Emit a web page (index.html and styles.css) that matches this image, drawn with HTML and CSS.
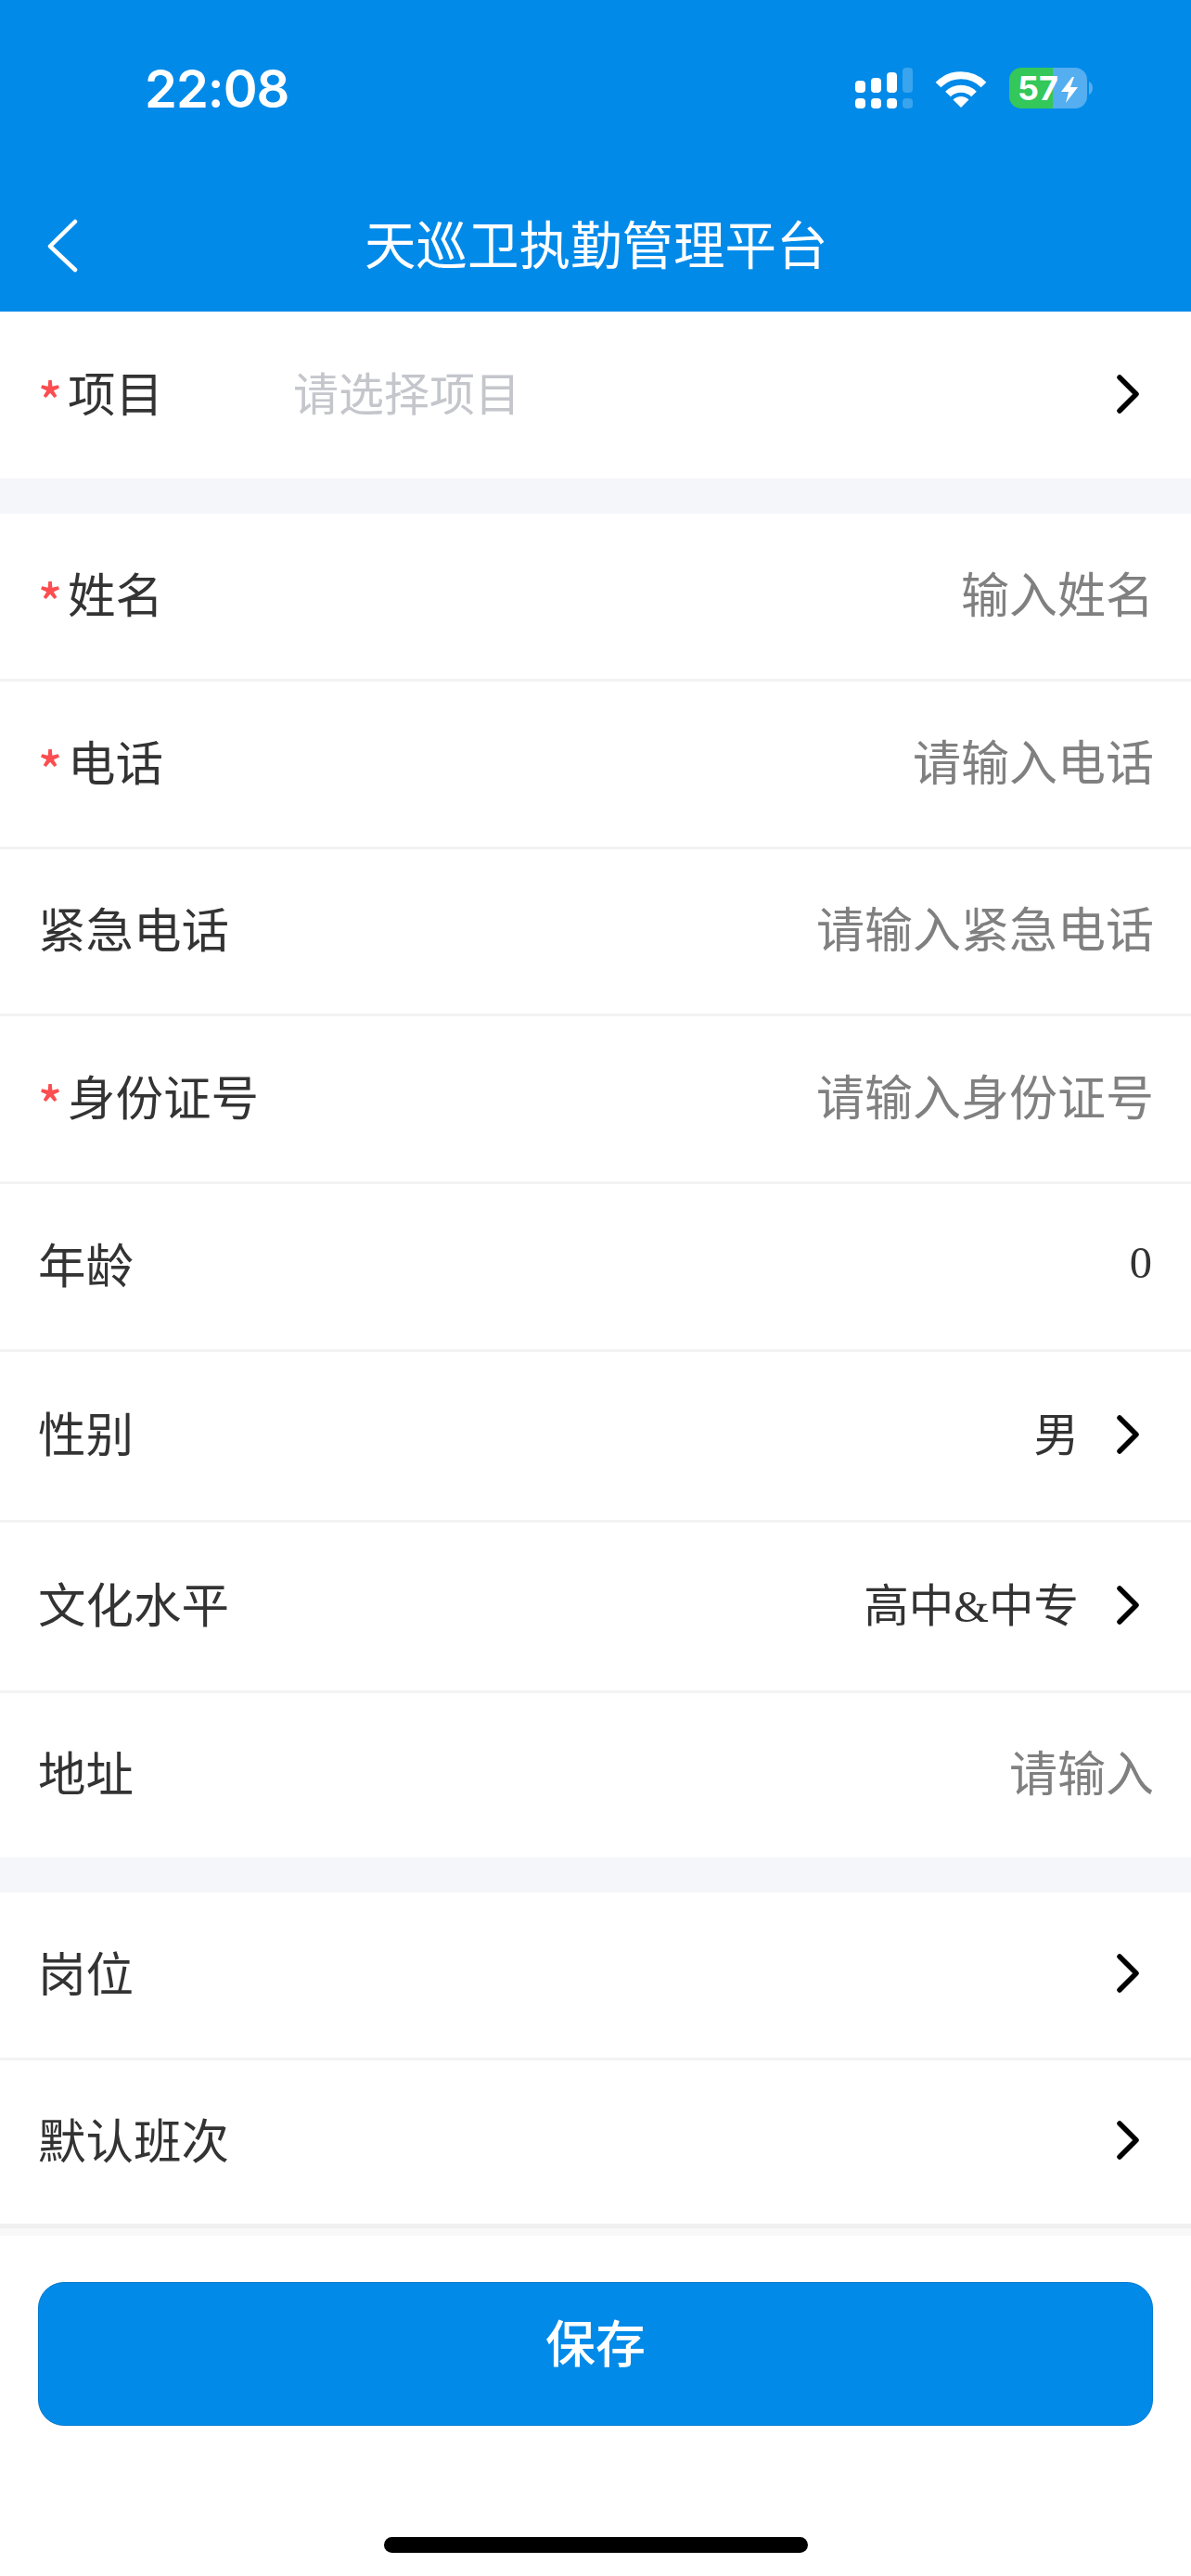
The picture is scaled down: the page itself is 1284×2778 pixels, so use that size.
FILE: index.html
```html
<!DOCTYPE html>
<html lang="zh-CN">
<head>
  <meta charset="UTF-8" />
  <meta name="viewport" content="width=device-width, initial-scale=1.0" />
  <title>天巡卫执勤管理平台</title>
  <link rel="stylesheet" href="styles.css">
</head>
<body>
  <header class="top">
    <div class="status">
      <span class="time">22:08</span>
      <svg class="status-icons" width="260" height="50" viewBox="920 70 260 50">
        <!-- signal -->
        <g fill="#fff">
          <rect x="922" y="87" width="11" height="13" rx="4"/>
          <rect x="939" y="84" width="11" height="16" rx="4"/>
          <rect x="956" y="78" width="11" height="22" rx="4"/>
          <rect x="922" y="106" width="11" height="11" rx="4"/>
          <rect x="939" y="106" width="11" height="11" rx="4"/>
          <rect x="956" y="106" width="11" height="11" rx="4"/>
        </g>
        <g fill="#fff" opacity="0.22">
          <rect x="973" y="73" width="11" height="27" rx="4"/>
          <rect x="973" y="106" width="11" height="11" rx="4"/>
        </g>
        <!-- wifi -->
        <g fill="none" stroke="#fff" stroke-width="8">
          <path d="M1011.5 91.5a34.6 34.6 0 0 1 49 0"/>
          <path d="M1022 101.500a19.800 19.800 0 0 1 28 0"/>
        </g>
        <path d="M1027.500 107.500a12 12 0 0 1 17 0L1036 116z" fill="#fff"/>
        <!-- battery -->
        <path d="M1101 73h34v44h-34a13 13 0 0 1-13-13v-18a13 13 0 0 1 13-13z" fill="#34c759"/>
        <path d="M1135 73h24a13 13 0 0 1 13 13v18a13 13 0 0 1-13 13h-24z" fill="#54aef0"/>
        <path d="M1174 88c2.500 1 4 3.500 4 7s-1.500 6-4 7z" fill="#54aef0"/>
        <text class="battery-num" x="1097" y="108">57</text>
        <path d="M1156 83l-12 16h8l-3 12 13-17h-8l4-11z" fill="#fff"/>
      </svg>
    </div>
    <div class="nav">
      <svg class="back" width="34" height="58" viewBox="0 0 34 58">
        <path d="M31 3L4 29.500 31 55" fill="none" stroke="#fff" stroke-width="4.500" stroke-linecap="round" stroke-linejoin="round"/>
      </svg>
      <h1 class="title">天巡卫执勤管理平台</h1>
    </div>
  </header>

  <main class="form">
    <section class="group group-project">
      <div class="row row-left">
        <div class="label"><span class="star">*</span>项目</div>
        <div class="picker-hint">请选择项目</div>
        <svg class="arrow" width="28" height="44" viewBox="0 0 28 44"><path d="M4 4l18 18L4 40" /></svg>
      </div>
    </section>

    <section class="group">
      <div class="row">
        <div class="label"><span class="star">*</span>姓名</div>
        <div class="hint">输入姓名</div>
      </div>
      <div class="row">
        <div class="label"><span class="star">*</span>电话</div>
        <div class="hint">请输入电话</div>
      </div>
      <div class="row">
        <div class="label">紧急电话</div>
        <div class="hint">请输入紧急电话</div>
      </div>
      <div class="row">
        <div class="label"><span class="star">*</span>身份证号</div>
        <div class="hint">请输入身份证号</div>
      </div>
      <div class="row">
        <div class="label">年龄</div>
        <div class="value">0</div>
      </div>
      <div class="row row-pick">
        <div class="label">性别</div>
        <div class="value">男</div>
        <svg class="arrow" width="28" height="44" viewBox="0 0 28 44"><path d="M4 4l18 18L4 40" /></svg>
      </div>
      <div class="row row-pick">
        <div class="label">文化水平</div>
        <div class="value">高中&amp;中专</div>
        <svg class="arrow" width="28" height="44" viewBox="0 0 28 44"><path d="M4 4l18 18L4 40" /></svg>
      </div>
      <div class="row">
        <div class="label">地址</div>
        <div class="hint">请输入</div>
      </div>
    </section>

    <section class="group">
      <div class="row">
        <div class="label">岗位</div>
        <svg class="arrow" width="28" height="44" viewBox="0 0 28 44"><path d="M4 4l18 18L4 40" /></svg>
      </div>
      <div class="row">
        <div class="label">默认班次</div>
        <svg class="arrow" width="28" height="44" viewBox="0 0 28 44"><path d="M4 4l18 18L4 40" /></svg>
      </div>
    </section>
  </main>

  <footer class="bottom">
    <button class="save">保存</button>
    <div class="home-bar"></div>
  </footer>
</body>
</html>
```

FILE: styles.css
```css
* {
  box-sizing: border-box;
}
body {
  margin: 0;
  width: 1284px;
  height: 2778px;
  display: flex;
  flex-direction: column;
  background: #fff;
  font-family: "Liberation Serif", "Noto Sans CJK SC", serif;
  color: #333;
  overflow: hidden;
}

/* blue header */
.top {
  height: 336px;
  background: #028ae9;
  color: #fff;
}
.status {
  height: 228px;
  padding: 70px 0 0 156px;
  display: flex;
  justify-content: space-between;
  align-items: flex-start;
}
.time {
  font-family: Inter, "Noto Sans", sans-serif;
  font-size: 56px;
  line-height: 52px;
  font-weight: 600;
  letter-spacing: -1px;
}
.status-icons {
  margin-right: 104px;
}
.battery-num {
  font-family: Inter, sans-serif;
  font-size: 36px;
  font-weight: 700;
  fill: #fff;
}
.nav {
  display: flex;
  align-items: center;
  height: 70px;
  padding-left: 50px;
}
.back {
  flex: none;
  margin-top: 3px;
}
.title {
  margin: 0 0 5px 309px;
  font-family: "Noto Sans CJK SC", sans-serif;
  font-size: 55.500px;
  font-weight: 400;
  white-space: nowrap;
}

/* form rows */
.form {
  flex: 1;
  background: #f5f6fa;
  display: flex;
  flex-direction: column;
  gap: 38px;
}
.group {
  background: #fff;
}
.row {
  display: flex;
  align-items: center;
  height: 180.800px;
  padding: 0 42px 9px 41px;
  border-bottom: 3px solid #f3f3f3;
  font-size: 52px;
}
.row-pick {
  height: 184px;
}
.group .row:last-child {
  height: 177px;
  border-bottom: none;
}
.group:last-child .row:last-child {
  height: 176px;
}
.group-project .row:last-child {
  height: 180px;
}
.label {
  flex: 1;
  white-space: nowrap;
  font-family: "Noto Sans CJK SC", sans-serif;
  font-size: 51.500px;
}
.star {
  display: inline-block;
  width: 32px;
  color: #fc4d50;
  font-family: "Noto Sans CJK SC", sans-serif;
  font-size: 54px;
  font-weight: 500;
  line-height: 1;
  vertical-align: -9px;
}
.row-left .label {
  flex: none;
  width: 275px;
}
.picker-hint {
  flex: 1;
  color: #c4c6cc;
  font-size: 49px;
  font-family: "Noto Sans CJK SC", sans-serif;
}
.hint {
  color: #808080;
  margin-right: -2px;
}
.value {
  color: #333;
  font-size: 48.500px;
}
.arrow {
  flex: none;
  margin: 6px 11px 0 40px;
}
.arrow path {
  fill: none;
  stroke: #000;
  stroke-width: 5.500;
  stroke-linecap: round;
  stroke-linejoin: round;
}

/* save bar */
.bottom {
  height: 380px;
  flex: none;
  background: #fff;
  border-top: 5px solid #f0f0f0;
  box-shadow: inset 0 8px 0 #f8f8f8;
  padding: 58px 41px 0;
  display: flex;
  flex-direction: column;
  align-items: center;
}
.save {
  width: 100%;
  height: 155px;
  padding: 0 0 29px;
  background: #028ae9;
  color: #fff;
  border: 1px solid #0279cf;
  border-radius: 28px;
  font-family: "Noto Sans CJK SC", sans-serif;
  font-size: 54px;
  font-weight: 500;
}
.home-bar {
  margin-top: 120px;
  width: 457px;
  height: 17px;
  border-radius: 9px;
  background: #000;
}
```
